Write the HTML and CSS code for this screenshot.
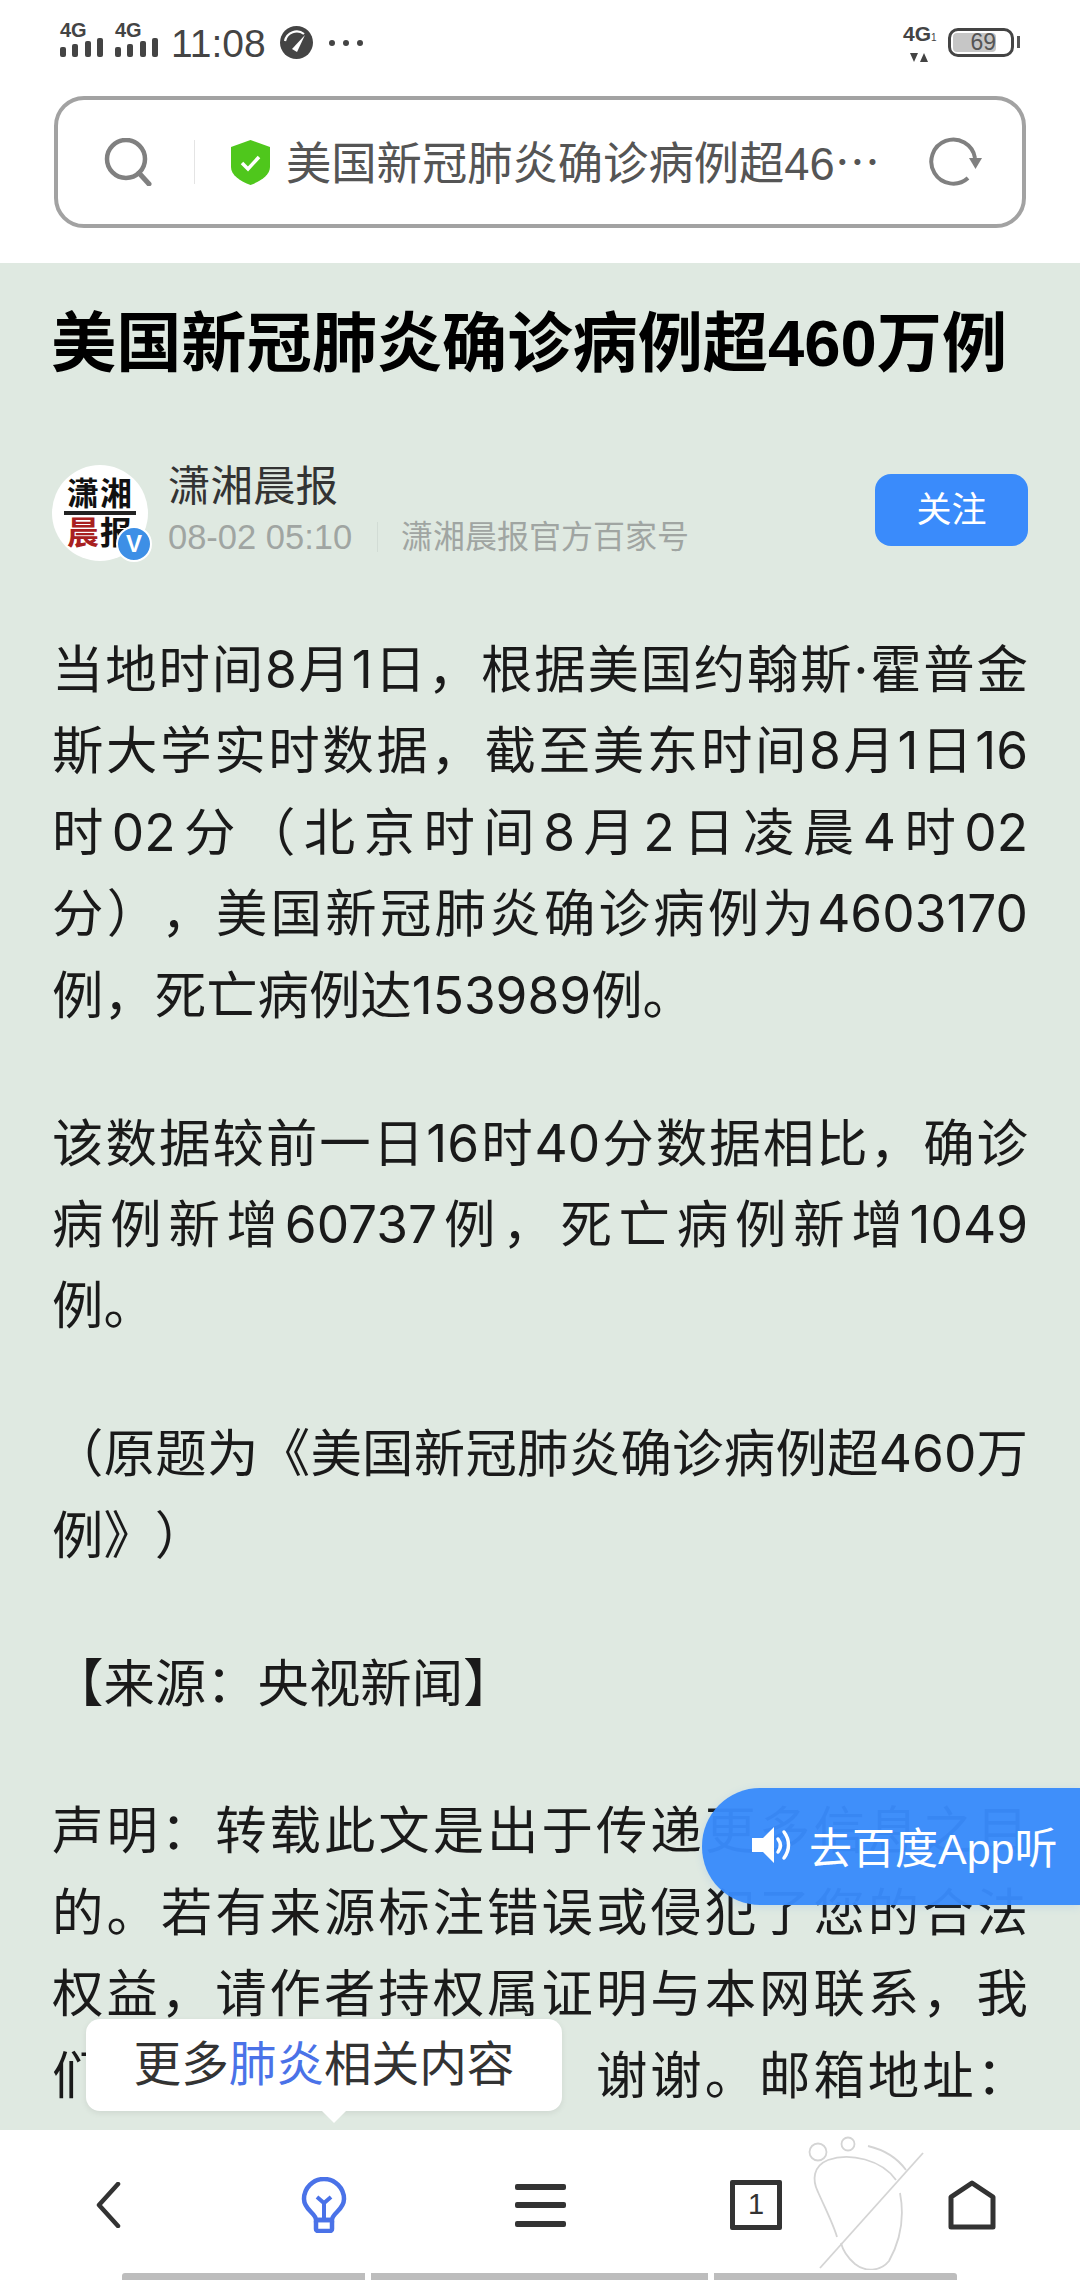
FILE: index.html
```html
<!DOCTYPE html>
<html lang="zh-CN">

<head>
    <meta charset="UTF-8">
    <meta name="viewport" content="width=device-width, initial-scale=1.0">
    <title>美国新冠肺炎确诊病例超460万例</title>
    <link rel="stylesheet" href="styles.css">
</head>

<body>
    <div class="phone">
        <header class="top">
            <div class="status">
                <div class="status-left">
                    <div class="signal">
                        <span class="signal-label">4G</span>
                        <div class="bars"><i class="b1"></i><i class="b2"></i><i class="b3"></i><i class="b4"></i></div>
                    </div>
                    <div class="signal">
                        <span class="signal-label">4G</span>
                        <div class="bars"><i class="b1"></i><i class="b2"></i><i class="b3"></i><i class="b4"></i></div>
                    </div>
                    <span class="clock">11:08</span>
                    <svg class="gauge" viewBox="0 0 33 33">
                        <circle cx="16.5" cy="16.5" r="16.5" fill="#444"/>
                        <path d="M5 15a12 12 0 0 1 19-7" fill="none" stroke="#fff" stroke-width="2.200"/>
                        <path d="M12 23l13-14-8 17z" fill="#fff"/>
                    </svg>
                    <div class="dots"><i></i><i></i><i></i></div>
                </div>
                <div class="status-right">
                    <div class="net">
                        <span class="net-label">4G<small>1</small></span>
                        <svg class="net-arrows" viewBox="0 0 18 9"><path d="M0 0h8L4 9zM10 9h8L14 0z" fill="#444"/></svg>
                    </div>
                    <div class="battery"><span class="battery-fill">69</span></div>
                    <span class="battery-tip"></span>
                </div>
            </div>
            <div class="address">
                <svg class="icon-search" viewBox="0 0 48 48">
                    <circle cx="22" cy="21" r="19" fill="none" stroke="#808080" stroke-width="4.500"/>
                    <path d="M35 35l10 11" stroke="#808080" stroke-width="5" stroke-linecap="round"/>
                </svg>
                <span class="address-sep"></span>
                <svg class="icon-shield" viewBox="0 0 39 45">
                    <path d="M19.500 0L39 7v20c0 8-9 14-19.500 18C9 41 0 35 0 27V7z" fill="#4fc71c"/>
                    <path d="M11 23l6 6 11-12" fill="none" stroke="#fff" stroke-width="3.500"/>
                </svg>
                <span class="address-text">美国新冠肺炎确诊病例超46<span class="more">…</span></span>
                <svg class="icon-reload" viewBox="0 0 56 52">
                    <path d="M42 42A22 22 0 1 1 49 22" fill="none" stroke="#808080" stroke-width="4"/>
                    <path d="M43 22h13l-6.500 11z" fill="#808080"/>
                </svg>
            </div>
        </header>

        <main class="article">
            <h1 class="headline">美国新冠肺炎确诊病例超460万例</h1>
            <div class="author">
                <div class="avatar">
                    <span class="logo-row">潇湘</span>
                    <span class="logo-rule"></span>
                    <span class="logo-row"><em>晨</em>报</span>
                    <span class="badge">V</span>
                </div>
                <div class="author-info">
                    <div class="author-name">潇湘晨报</div>
                    <div class="author-meta">
                        <span class="meta-time">08-02 05:10</span>
                        <span class="meta-sep"></span>
                        <span>潇湘晨报官方百家号</span>
                    </div>
                </div>
                <button class="follow">关注</button>
            </div>

            <p>
                <span class="ln">当地时间8月1日，根据美国约翰斯·霍普金</span>
                <span class="ln">斯大学实时数据，截至美东时间8月1日16</span>
                <span class="ln">时02分（北京时间8月2日凌晨4时02</span>
                <span class="ln">分），美国新冠肺炎确诊病例为4603170</span>
                <span class="end">例，死亡病例达153989例。</span>
            </p>
            <p>
                <span class="ln">该数据较前一日16时40分数据相比，确诊</span>
                <span class="ln">病例新增60737例，死亡病例新增1049</span>
                <span class="end">例。</span>
            </p>
            <p>
                <span class="ln">（原题为《美国新冠肺炎确诊病例超460万</span>
                <span class="end">例》）</span>
            </p>
            <p>
                <span class="end">【来源：央视新闻】</span>
            </p>
            <p>
                <span class="ln">声明：转载此文是出于传递更多信息之目</span>
                <span class="ln">的。若有来源标注错误或侵犯了您的合法</span>
                <span class="ln">权益，请作者持权属证明与本网联系，我</span>
                <span class="ln">们将及时更正、删除，谢谢。邮箱地址：</span>
            </p>
        </main>

        <nav class="toolbar">
            <div class="tool">
                <svg class="icon-back" viewBox="0 0 26 46"><path d="M23 2L4 23l19 21" fill="none" stroke="#333" stroke-width="4.500" stroke-linecap="round" stroke-linejoin="round"/></svg>
            </div>
            <div class="tool">
                <svg class="icon-bulb" viewBox="0 0 46 56">
                    <path d="M15 43C15 36 3 33 3 22A20 20 0 0 1 43 22C43 33 31 36 31 43z" fill="none" stroke="#4a72e8" stroke-width="4.500"/>
                    <path d="M16 20l7 6 7-6M23 26v17" fill="none" stroke="#4a72e8" stroke-width="4"/>
                    <rect x="15" y="43" width="16" height="11" rx="2" fill="none" stroke="#4a72e8" stroke-width="4.500"/>
                </svg>
            </div>
            <div class="tool">
                <div class="menu"><i></i><i></i><i></i></div>
            </div>
            <div class="tool">
                <div class="tabs">1</div>
            </div>
            <div class="tool">
                <svg class="icon-home" viewBox="0 0 48 50"><path d="M24 3L45 17v30H3V17z" fill="none" stroke="#333" stroke-width="5" stroke-linejoin="round"/></svg>
            </div>
        </nav>

        <div class="scrollbar"><i class="seg-a"></i><i class="seg-b"></i><i class="seg-c"></i></div>

        <div class="listen">
            <svg class="icon-speaker" viewBox="0 0 42 38">
                <path d="M1 12h11L23 1v36L12 26H1z" fill="#fff"/>
                <path d="M27 13c3 4 3 9 0 13M33 6c6 8 6 18 0 26" fill="none" stroke="#fff" stroke-width="3.500" stroke-linecap="round"/>
            </svg>
            <span>去百度App听</span>
        </div>

        <div class="tip">更多<b>肺炎</b>相关内容</div>

        <svg class="footprint" viewBox="0 0 125 140">
            <g fill="none" stroke="#d4d4d4" stroke-width="1.800">
                <circle cx="18" cy="22" r="8.500"/>
                <circle cx="48" cy="14" r="6.500"/>
                <path d="M68 16c17 4 30 13 38 24"/>
                <path d="M96 50C82 30 50 22 28 30C13 36 12 50 18 62C26 80 34 96 37 107"/>
                <path d="M100 63c5 26-1 50-11 68c-9 11-24 11-34 3c-7-6-12-13-14-21"/>
                <path d="M123 23L20 138"/>
            </g>
        </svg>
    </div>
</body>

</html>
```

FILE: styles.css
```css
* {
    box-sizing: border-box;
}

body {
    margin: 0;
    font-family: "Liberation Sans", "Noto Sans CJK SC", sans-serif;
    background-color: #fff;
    text-spacing-trim: space-all;
}

.phone {
    position: relative;
    display: flex;
    flex-direction: column;
    width: 1080px;
    height: 2280px;
    overflow: hidden;
}

/* status bar + address bar */
.top {
    flex: none;
    height: 263px;
    padding: 23px 55px 0 60px;
    background-color: #fff;
}

.status {
    display: flex;
    justify-content: space-between;
    height: 37px;
    color: #444;
}

.status-left,
.status-right {
    display: flex;
    align-items: flex-start;
}

.signal {
    display: flex;
    flex-direction: column;
    width: 43px;
    margin-right: 12px;
}

.signal-label {
    height: 15px;
    font-size: 20px;
    line-height: 15px;
    font-weight: bold;
}

.bars {
    display: flex;
    align-items: flex-end;
    gap: 6.500px;
    height: 19px;
}

.bars i {
    width: 6px;
    border-radius: 2px;
    background-color: #444;
}

.bars .b1 { height: 10px; }
.bars .b2 { height: 13px; }
.bars .b3 { height: 16px; }
.bars .b4 { height: 19px; }

.clock {
    margin: -1px 14px 0 1px;
    font-size: 39px;
    line-height: 44px;
}

.gauge {
    width: 33px;
    height: 33px;
    margin-top: 3px;
}

.dots {
    display: flex;
    gap: 8px;
    margin: 17px 0 0 16px;
}

.dots i {
    width: 6px;
    height: 6px;
    border-radius: 50%;
    background-color: #444;
}

.status-right {
    padding-right: 5px;
}

.net {
    display: flex;
    flex-direction: column;
    align-items: flex-start;
    width: 34px;
    margin-right: 11px;
}

.net-label {
    font-size: 21px;
    line-height: 22px;
    font-weight: bold;
    white-space: nowrap;
}

.net-label small {
    font-size: 10px;
    font-weight: normal;
}

.net-arrows {
    width: 18px;
    height: 9px;
    margin: 4px 0 0 7px;
}

.battery {
    width: 66px;
    height: 29px;
    margin-top: 5px;
    padding: 2px;
    border: 3px solid #444;
    border-radius: 10px;
}

.battery-fill {
    display: block;
    width: 43px;
    height: 19px;
    border-radius: 4px;
    background-color: #c6c6c6;
    color: #555;
    font-size: 23px;
    line-height: 19px;
    text-align: right;
}

.battery-tip {
    width: 3px;
    height: 12px;
    margin: 13px 0 0 3px;
    background-color: #555;
}

.address {
    display: flex;
    align-items: center;
    width: 972px;
    height: 132px;
    margin: 36px 0 0 -6px;
    padding: 0 40px 0 46px;
    border: 4px solid #a2a2a2;
    border-radius: 30px;
}

.icon-search {
    flex: none;
    width: 48px;
    height: 48px;
}

.address-sep {
    flex: none;
    width: 1px;
    height: 44px;
    margin: 0 36px 0 42px;
    background-color: #e4e4e4;
}

.icon-shield {
    flex: none;
    width: 39px;
    height: 45px;
    margin-right: 16px;
}

.address-text {
    flex: 1;
    color: #555;
    font-size: 45.300px;
    line-height: 60px;
    white-space: nowrap;
}

.more {
    font-family: "Noto Sans CJK SC", sans-serif;
}

.icon-reload {
    flex: none;
    width: 56px;
    height: 52px;
}

/* article */
.article {
    flex: 1;
    min-height: 0;
    overflow: hidden;
    padding: 41px 52px 0;
    background-color: #dfe9e1;
}

.headline {
    margin: 0 -4px 81px -1px;
    color: #000;
    font-size: 65.200px;
    line-height: 80px;
    font-weight: bold;
    white-space: nowrap;
}

.author {
    display: flex;
    align-items: flex-start;
    height: 96px;
    margin-bottom: 68px;
}

.avatar {
    position: relative;
    display: flex;
    flex: none;
    flex-direction: column;
    align-items: center;
    justify-content: center;
    width: 96px;
    height: 96px;
    border-radius: 50%;
    background-color: #fff;
}

.logo-row {
    color: #111;
    font-size: 32px;
    line-height: 34px;
    font-weight: bold;
    letter-spacing: 1px;
    white-space: nowrap;
}

.logo-row em {
    color: #a82020;
    font-style: normal;
}

.logo-rule {
    width: 72px;
    height: 4px;
    margin: 0 0 1px;
    background-color: #222;
}

.badge {
    position: absolute;
    right: -4px;
    bottom: -1px;
    width: 36px;
    height: 36px;
    border: 2px solid #fff;
    border-radius: 50%;
    background-color: #3d8fe6;
    color: #fff;
    font-size: 24px;
    line-height: 32px;
    text-align: center;
    font-weight: bold;
}

.author-info {
    flex: 1;
    margin-left: 20px;
}

.author-name {
    margin-top: -3px;
    color: #333;
    font-size: 42.500px;
    line-height: 50px;
}

.author-meta {
    display: flex;
    align-items: center;
    margin-top: 3px;
    color: #a0a5a2;
    font-size: 32px;
    line-height: 44px;
}

.meta-time {
    width: 186px;
    font-size: 34.500px;
    white-space: nowrap;
}

.meta-sep {
    width: 1px;
    height: 30px;
    margin: 0 23px;
    background-color: #d2dcd5;
}

.follow {
    flex: none;
    width: 153px;
    height: 72px;
    margin-top: 9px;
    padding: 0 0 8px;
    border: none;
    border-radius: 16px;
    background-color: #3a8bfb;
    color: #fff;
    font-family: inherit;
    font-size: 35px;
}

.article p {
    margin: 0 0 66.500px;
    color: #1a1a1a;
    font-family: Inter, "Noto Sans CJK SC", sans-serif;
    font-size: 51.400px;
    line-height: 81.400px;
}

.ln {
    display: block;
    white-space: nowrap;
    text-align: justify;
    text-align-last: justify;
}

.end {
    display: block;
    white-space: nowrap;
}

/* bottom toolbar */
.toolbar {
    display: flex;
    flex: none;
    height: 150px;
    background-color: #fff;
}

.tool {
    display: flex;
    flex: 1;
    align-items: center;
    justify-content: center;
}

.icon-back {
    width: 26px;
    height: 46px;
}

.icon-bulb {
    width: 46px;
    height: 56px;
}

.menu {
    display: flex;
    flex-direction: column;
    justify-content: space-between;
    width: 51px;
    height: 43px;
}

.menu i {
    height: 6px;
    border-radius: 2px;
    background-color: #333;
}

.tabs {
    width: 52px;
    height: 50px;
    border: 5px solid #333;
    border-radius: 2px;
    color: #333;
    font-size: 29px;
    line-height: 38px;
    text-align: center;
}

.icon-home {
    width: 48px;
    height: 50px;
}

.scrollbar {
    position: absolute;
    left: 122px;
    bottom: 0;
    display: flex;
    gap: 6px;
    height: 7px;
}

.scrollbar i {
    background-color: #bdbdbd;
}

.seg-a {
    width: 243px;
    border-radius: 3px 0 0 0;
}

.seg-b {
    width: 337px;
}

.seg-c {
    width: 243px;
    border-radius: 0 3px 0 0;
}

/* things floating over the article */
.listen {
    position: absolute;
    top: 1788px;
    right: 0;
    display: flex;
    align-items: center;
    width: 378px;
    height: 117px;
    padding: 0 0 3px 49px;
    border-radius: 58px 0 0 58px;
    background-color: rgba(58, 139, 251, 0.97);
    box-shadow: 0 2px 8px rgba(58, 139, 251, 0.15);
    color: #fff;
    font-size: 43px;
}

.icon-speaker {
    flex: none;
    width: 42px;
    height: 38px;
    margin-right: 16px;
}

.tip {
    position: absolute;
    top: 2019px;
    left: 86px;
    width: 476px;
    height: 92px;
    border-radius: 14px;
    background-color: #fff;
    box-shadow: 0 2px 6px rgba(0, 0, 0, 0.08);
    color: #333;
    font-size: 47.600px;
    line-height: 92px;
    text-align: center;
}

.tip b {
    color: #4a72e8;
    font-weight: normal;
}

.tip::after {
    content: "";
    position: absolute;
    top: 92px;
    left: 236px;
    border-top: 12px solid #fff;
    border-left: 12px solid transparent;
    border-right: 12px solid transparent;
}

.footprint {
    position: absolute;
    top: 2130px;
    left: 800px;
    width: 125px;
    height: 140px;
}
```
